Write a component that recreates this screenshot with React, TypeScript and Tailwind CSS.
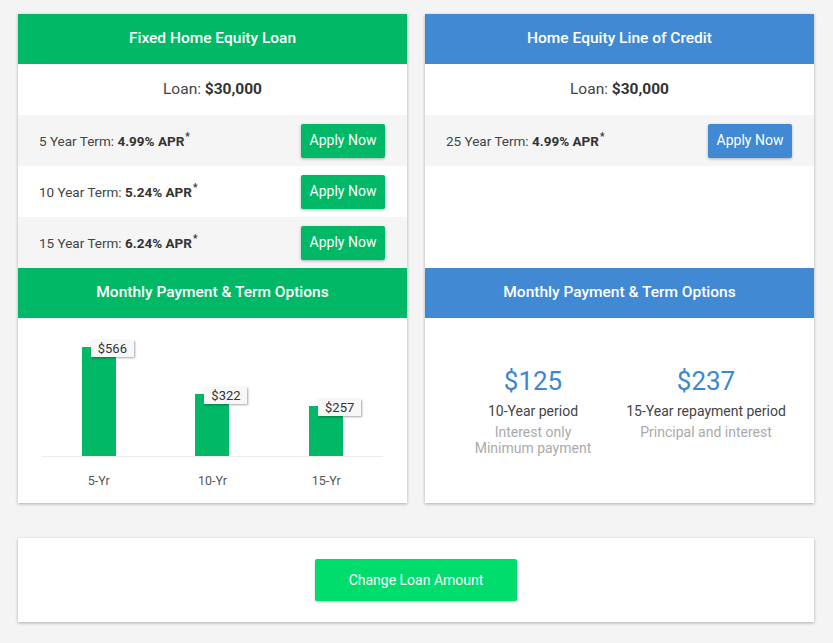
const GREEN = 'bg-[#00b865]';

interface Term {
    years: number;
    rate: string;
}

const fixedTerms: Term[] = [
    { years: 5, rate: '4.99%' },
    { years: 10, rate: '5.24%' },
    { years: 15, rate: '6.24%' },
];

const bars = [
    { label: '5-Yr', value: 566 },
    { label: '10-Yr', value: 322 },
    { label: '15-Yr', value: 257 },
];

function CardHeader({ title, color }: { title: string; color: string }) {
    return (
        <div
            className={`flex h-[50px] items-center justify-center text-[15.5px] font-medium text-white ${color}`}
        >
            {title}
        </div>
    );
}

function LoanRow() {
    return (
        <div className="flex h-[51px] items-center justify-center bg-white text-[15.5px] text-[#444]">
            Loan:&nbsp;<span className="font-bold text-[#333]">$30,000</span>
        </div>
    );
}

function TermRow({
    term,
    shaded,
    button,
}: {
    term: Term;
    shaded: boolean;
    button: string;
}) {
    return (
        <div
            className={`flex h-[51px] items-center justify-between pr-[22px] pl-[21px] ${
                shaded ? 'bg-[#f5f5f5]' : 'bg-white'
            }`}
        >
            <span className="pt-[2px] text-[13.5px] text-[#444]">
                {term.years} Year Term:{' '}
                <span className="font-bold text-[#333]">{term.rate} APR</span>
                <sup className="relative -top-[6px] ml-[1px] text-[10px] font-bold text-[#333]">*</sup>
            </span>
            <button
                className={`flex h-[34px] w-[84px] items-start justify-center rounded-[2px] pt-[6px] text-[14px] text-white shadow-[0_1px_3px_rgba(0,0,0,0.3)] ${button}`}
            >
                Apply Now
            </button>
        </div>
    );
}

function BarChart() {
    return (
        <div className="px-[24px] pt-[20px]">
            <div className="grid h-[119px] grid-cols-3 items-end border-b border-[#ececec]">
                {bars.map((b) => (
                    <div key={b.label} className="flex justify-center">
                        <div
                            className={`relative w-[34px] ${GREEN}`}
                            style={{ height: Math.round(b.value * 0.1927) }}
                        >
                            <div className="absolute -top-[7px] left-[9px] flex h-[17px] w-[43px] items-center justify-center text-[13px] text-[#333] bg-[#f7f7f7] shadow-[1px_1px_2px_rgba(0,0,0,0.35)]">
                                ${b.value}
                            </div>
                        </div>
                    </div>
                ))}
            </div>
            <div className="grid grid-cols-3 pt-[15px]">
                {bars.map((b) => (
                    <div
                        key={b.label}
                        className="text-center text-[12.5px] text-[#555]"
                    >
                        {b.label}
                    </div>
                ))}
            </div>
        </div>
    );
}

function PaymentSummary() {
    const items = [
        {
            amount: '$125',
            title: '10-Year period',
            notes: ['Interest only', 'Minimum payment'],
        },
        {
            amount: '$237',
            title: '15-Year repayment period',
            notes: ['Principal and interest'],
        },
    ];
    return (
        <div className="mx-auto grid w-[346px] grid-cols-2 pt-[48px]">
            {items.map((it) => (
                <div key={it.amount} className="flex flex-col items-center">
                    <div className="text-[26px] leading-[30px] text-[#3d87d0]">
                        {it.amount}
                    </div>
                    <div className="mt-[6px] text-[14px] leading-[18px] text-[#444]">
                        {it.title}
                    </div>
                    <div className="mt-[4px] text-center text-[14px] leading-[16px] text-[#aaa]">
                        {it.notes.map((n) => (
                            <div key={n}>{n}</div>
                        ))}
                    </div>
                </div>
            ))}
        </div>
    );
}

export default function App() {
    return (
        <div
            className="min-h-[643px] bg-[#f4f4f4] pt-[14px] pr-[19px] pl-[18px]"
            style={{ fontFamily: 'Roboto, "Liberation Sans", sans-serif' }}
        >
            <div className="grid grid-cols-2 gap-[18px]">
                <div className="bg-white shadow-[0_1px_3px_rgba(0,0,0,0.3)]">
                    <CardHeader title="Fixed Home Equity Loan" color={GREEN} />
                    <LoanRow />
                    {fixedTerms.map((t, i) => (
                        <TermRow
                            key={t.years}
                            term={t}
                            shaded={i % 2 === 0}
                            button="bg-[#00b865]"
                        />
                    ))}
                    <CardHeader title="Monthly Payment & Term Options" color={GREEN} />
                    <div className="h-[185px]">
                        <BarChart />
                    </div>
                </div>
                <div className="bg-white shadow-[0_1px_3px_rgba(0,0,0,0.3)]">
                    <CardHeader title="Home Equity Line of Credit" color="bg-[#4189d2]" />
                    <LoanRow />
                    <TermRow
                        term={{ years: 25, rate: '4.99%' }}
                        shaded
                        button="bg-[#4189d2]"
                    />
                    <div className="h-[102px]" />
                    <CardHeader title="Monthly Payment & Term Options" color="bg-[#4189d2]" />
                    <div className="h-[185px]">
                        <PaymentSummary />
                    </div>
                </div>
            </div>
            <div className="mt-[35px] flex h-[84px] items-center justify-center bg-white shadow-[0_1px_3px_rgba(0,0,0,0.3)]">
                <button className="h-[42px] w-[202px] rounded-[2px] bg-[#00dd6d] text-[14px] text-white shadow-[0_1px_2px_rgba(0,0,0,0.25)]">
                    Change Loan Amount
                </button>
            </div>
        </div>
    );
}
